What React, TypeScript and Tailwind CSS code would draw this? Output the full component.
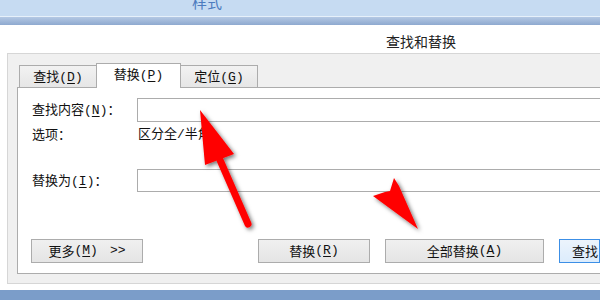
import React from 'react';

const font = { fontFamily: '"Noto Sans CJK SC", "Noto Sans", sans-serif' };
const mono = { fontFamily: '"Liberation Mono", "DejaVu Sans Mono", monospace' };

const Key = ({ k }: { k: string }) => (
	<span style={mono}>
		(<span className="underline underline-offset-2">{k}</span>)
	</span>
);

const Tab = ({ label, k, active }: { label: string; k: string; active?: boolean }) => (
	<div
		className={
			active
				? 'relative z-10 -ml-px h-[25px] -mb-px bg-white border border-b-0 border-[#acacac] flex items-center justify-center'
				: 'h-[22px] -ml-px first:ml-0 bg-gradient-to-b from-[#f2f2f2] to-[#e6e6e6] border border-b-0 border-[#acacac] flex items-center justify-center'
		}
		style={{ width: active ? 85 : 78 }}
	>
		<span className={active ? 'text-[13px] text-[#111] -mt-[2px]' : 'text-[13px] text-[#111]'}>
			{label}
			<Key k={k} />
		</span>
	</div>
);

const Btn = ({ children, w, focus }: { children: React.ReactNode; w: number; focus?: boolean }) => (
	<div
		className={
			focus
				? 'h-[24px] shrink-0 border border-[#3c8fe6] bg-gradient-to-b from-[#ecf4fc] to-[#dcecfc] flex items-center pl-[12px] text-[13px] text-[#111] whitespace-nowrap overflow-hidden'
				: 'h-[24px] shrink-0 border border-[#acacac] bg-gradient-to-b from-[#f0f0f0] to-[#e5e5e5] flex items-center justify-center text-[13px] text-[#111] whitespace-nowrap'
		}
		style={{ width: w }}
	>
		{children}
	</div>
);

const Arrows = () => (
	<svg className="absolute inset-0 pointer-events-none" width="600" height="300" viewBox="0 0 600 300">
		<defs>
			<filter id="sh" x="-30%" y="-30%" width="160%" height="160%">
				<feDropShadow dx="2" dy="2" stdDeviation="2" floodColor="#000" floodOpacity="0.55" />
			</filter>
		</defs>
		<g filter="url(#sh)" fill="#ff0000">
			<line x1="220" y1="160" x2="248" y2="224" stroke="#ff0000" strokeWidth="7" strokeLinecap="round" />
			<polygon points="200,110 234,154 205,165" />
			<polygon points="394,178 399,186 418,229 373,196 385,192 390,191" />
		</g>
	</svg>
);

export default function App() {
	return (
		<div className="relative w-[600px] h-[300px] overflow-hidden bg-white" style={font}>
			<div className="h-[16px] bg-[#c6dbf2] overflow-hidden pl-[192px]">
				<div className="-mt-[8px] text-[15px] leading-[20px] text-[#4d7cbf]">样式</div>
			</div>
			<div className="h-px bg-[#e6f0fa]" />
			<div className="h-[8px] bg-gradient-to-b from-[#b4c8e4] to-[#8ea9cf]" />
			<div className="h-[28px] pl-[386px] pt-[7px] text-[14px] leading-[18px] text-[#222]">查找和替换</div>

			<div className="ml-[7px] h-[231px] border border-r-0 border-[#d6d6d6] bg-[#f0f0f0] pt-[9px] pl-[9px] flex flex-col">
				<div className="flex items-end pl-[2px]">
					<Tab label="查找" k="D" />
					<Tab label="替换" k="P" active />
					<Tab label="定位" k="G" />
				</div>
				<div className="h-[187px] border border-r-0 border-[#acacac] bg-white flex flex-col pt-[10px] text-[13px] text-[#111]">
					<div className="flex items-center pl-[14px]">
						<div className="w-[105px] whitespace-nowrap">
							查找内容<Key k="N" />：
						</div>
						<div className="flex-1 h-[24px] border border-r-0 border-[#acacac]" />
					</div>
					<div className="flex items-center pl-[14px] h-[20px] mt-[2px]">
						<div className="w-[106px]">选项：</div>
						<div>
							区分全<span style={mono}>/</span>半角
						</div>
					</div>
					<div className="flex items-center pl-[14px] mt-[25px]">
						<div className="w-[105px] whitespace-nowrap">
							替换为<Key k="I" />：
						</div>
						<div className="flex-1 h-[23px] border border-r-0 border-[#acacac]" />
					</div>
					<div className="mt-auto mb-[10px] flex pl-[13px]">
						<Btn w={112}>
							更多<Key k="M" />
							<span className="ml-[12px]" style={mono}>
								&gt;&gt;
							</span>
						</Btn>
						<div className="w-[115px] shrink-0" />
						<Btn w={112}>
							替换<Key k="R" />
						</Btn>
						<div className="w-[15px] shrink-0" />
						<Btn w={159}>
							全部替换<Key k="A" />
						</Btn>
						<div className="w-[15px] shrink-0" />
						<Btn w={41} focus>
							查找
						</Btn>
					</div>
				</div>
			</div>
			<div className="h-[6px] bg-white" />
			<div className="h-[10px] bg-[#7b9dc9]" />
			<Arrows />
		</div>
	);
}
